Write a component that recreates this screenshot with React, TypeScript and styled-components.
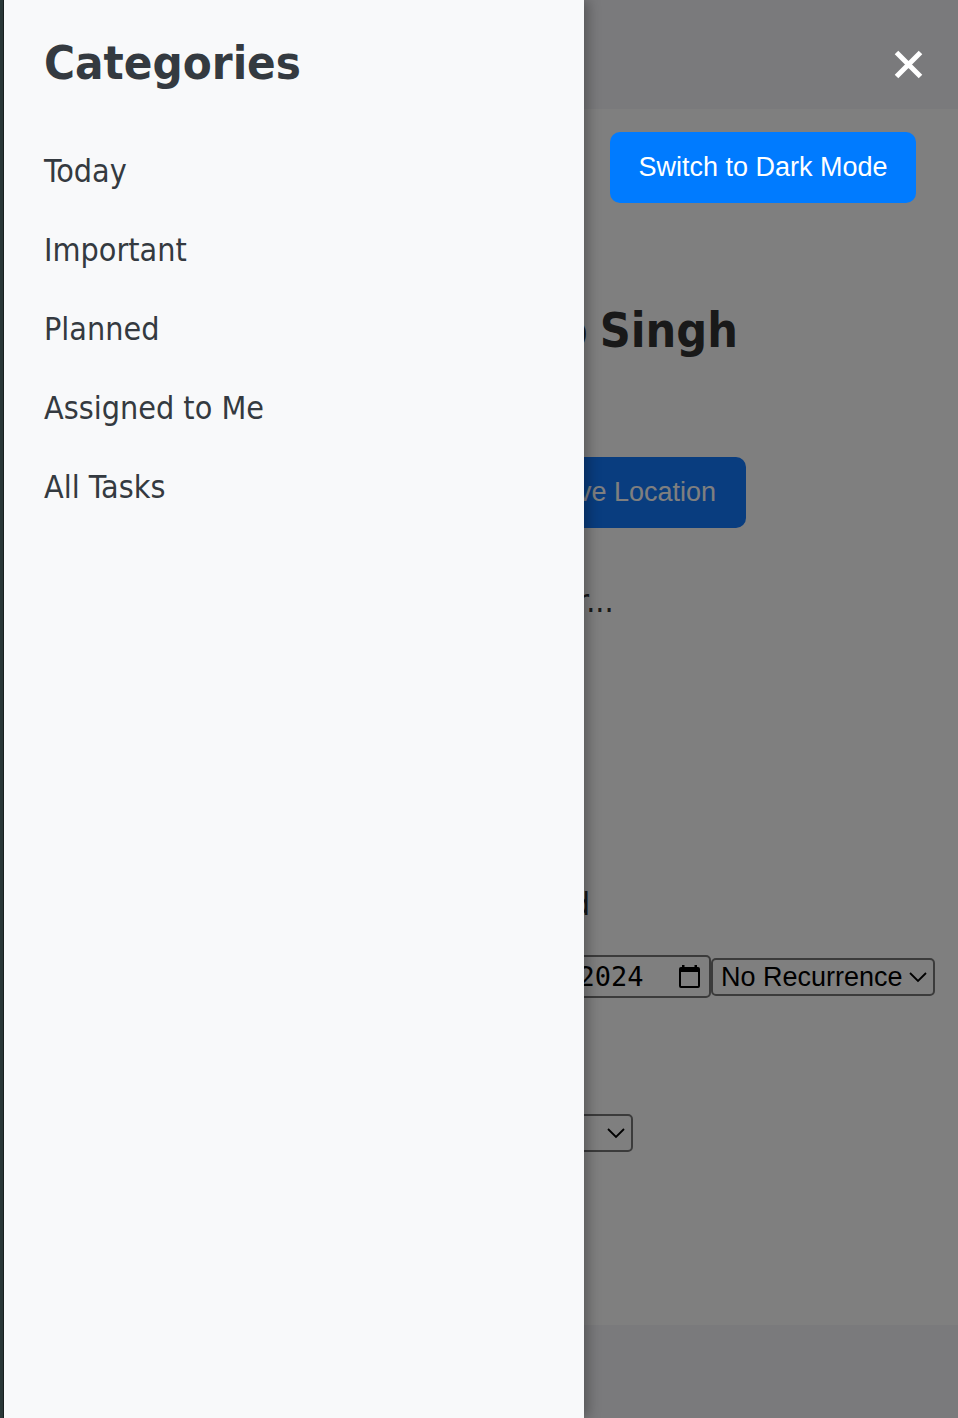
import React from "react";
import styled, { createGlobalStyle } from "styled-components";

const GlobalStyle = createGlobalStyle`
  * { box-sizing: border-box; }
  body {
    margin: 0;
    background: #f5f5f9;
    font-family: "DejaVu Sans Condensed", Tahoma, sans-serif;
    font-size: 32px;
    line-height: 40px;
    color: #333;
  }
  h1, h2, p, ul { margin: 0; padding: 0; }
`;

const Shell = styled.div`
  position: relative;
  display: flex;
  min-height: 100vh;
`;

const Edge = styled.div`
  flex: none;
  width: 4px;
  background: #2b3a3a;
  border-right: 1px solid #1a2222;
`;

const Page = styled.div`
  flex: 1;
  min-width: 0;
  display: flex;
  flex-direction: column;
`;

const Header = styled.header`
  height: 109px;
  background: #f5f5f9;
`;

const Footer = styled.footer`
  flex: 1;
  background: #f5f5f9;
`;

const Main = styled.main`
  display: flex;
  flex-direction: column;
  align-items: center;
  padding: 192px 20px 173px;
  background: #fff;
`;

const Title = styled.h1`
  display: flex;
  justify-content: flex-end;
  gap: 12px;
  min-width: 514px;
  font-size: 48px;
  line-height: 58px;
  white-space: nowrap;
`;

const Button = styled.button<{ $wide?: boolean }>`
  min-width: ${(p) => (p.$wide ? "530px" : "306px")};
  height: 71px;
  padding: 0 ${(p) => (p.$wide ? "30px" : "28px")};
  border: 0;
  border-radius: 10px;
  background: ${(p) => (p.$wide ? "#127aff" : "#007bff")};
  color: #fff;
  font: 27px/31px "Liberation Sans", Arial, sans-serif;
  white-space: nowrap;
  text-align: ${(p) => (p.$wide ? "right" : "center")};
`;

const LocationArea = styled.div`
  padding: 98px 0 53px;
`;

const TaskLine = styled.div`
  display: flex;
  align-items: center;
  justify-content: flex-end;
  width: 218px;
  margin: 263px 0 31px;
  white-space: nowrap;
`;

const Fields = styled.div`
  display: flex;
  align-items: center;
  margin-bottom: 116px;
`;

const Control = styled.span<{ $width: number }>`
  position: relative;
  display: block;
  width: ${(p) => p.$width}px;
  svg {
    position: absolute;
    top: 0;
    bottom: 0;
    right: 8px;
    margin: auto;
    pointer-events: none;
  }
`;

const Input = styled.input<{ $mono?: boolean }>`
  display: block;
  width: 100%;
  height: 43px;
  padding: 0 8px;
  border: 2px solid #767676;
  border-radius: 5px;
  background: #fff;
  color: #000;
  font-size: 27px;
  font-family: ${(p) => (p.$mono ? '"DejaVu Sans Mono", monospace' : '"Liberation Sans", Arial, sans-serif')};
  &::-webkit-calendar-picker-indicator {
    opacity: 0;
    width: 22px;
    margin-left: 26px;
    padding: 0;
  }
`;

const Select = styled.select`
  appearance: none;
  display: block;
  width: 100%;
  height: 38px;
  padding: 2px 8px 0;
  border: 2px solid #767676;
  border-radius: 5px;
  background: #fff;
  color: #000;
  font: 27px/31px "Liberation Sans", Arial, sans-serif;
`;

const Overlay = styled.div`
  position: absolute;
  inset: 0 0 0 4px;
  background: rgba(0, 0, 0, 0.5);
`;

const Drawer = styled.nav`
  position: absolute;
  top: 0;
  bottom: 0;
  left: 4px;
  width: 580px;
  max-width: 100%;
  padding: 34px 40px;
  background: #f8f9fa;
  color: #343a40;
  box-shadow: 4px 0 12px rgba(0, 0, 0, 0.3);
`;

const DrawerTitle = styled.h2`
  font-size: 47px;
  line-height: 58px;
`;

const DrawerList = styled.ul`
  display: flex;
  flex-direction: column;
  gap: 39px;
  margin-top: 59px;
  list-style: none;
`;

const DrawerLink = styled.a`
  color: inherit;
  text-decoration: none;
`;

const TopControls = styled.div`
  position: absolute;
  top: 46px;
  right: 32px;
  display: flex;
  flex-direction: column;
  align-items: flex-end;
  gap: 50px;
  padding-right: 10px;
`;

const CloseButton = styled.button`
  width: 36px;
  height: 36px;
  margin-right: -10px;
  padding: 0;
  border: 0;
  background: none;
  color: #fff;
  svg { display: block; }
`;

const Chevron = () => (
  <svg width="18" height="12" viewBox="0 0 18 12" fill="none" stroke="#000" strokeWidth="1.800" aria-hidden="true">
    <path d="M1 2l8 8 8-8" />
  </svg>
);

const CalendarIcon = () => (
  <svg width="24" height="24" viewBox="0 0 24 24" aria-hidden="true">
    <path d="M3 0h2.500v2h10V0H18v2h1a2 2 0 0 1 2 2v17a2 2 0 0 1-2 2H2a2 2 0 0 1-2-2V4a2 2 0 0 1 2-2h1zM2 7v14h17V7z" fill="#000" fillRule="evenodd" />
  </svg>
);

const categories = ["Today", "Important", "Planned", "Assigned to Me", "All Tasks"];

export default function App() {
  return (
    <>
      <GlobalStyle />
      <Shell>
        <Edge />
        <Page>
          <Header />
          <Main>
            <Title>
              <span>Hello, Kuldeep</span>
              <span>Singh</span>
            </Title>
            <LocationArea>
              <Button $wide>Get Weather for Live Location</Button>
            </LocationArea>
            <p>Loading weather...</p>
            <TaskLine>Task Assigned</TaskLine>
            <Fields>
              <Control $width={439}>
                <Input type="text" aria-label="Task" />
              </Control>
              <Control $width={245}>
                <Input $mono type="date" aria-label="Due date" defaultValue="2024-12-12" />
                <CalendarIcon />
              </Control>
              <Control $width={224}>
                <Select aria-label="Recurrence">
                  <option>No Recurrence</option>
                </Select>
                <Chevron />
              </Control>
            </Fields>
            <Control $width={304}>
              <Select aria-label="Filter">
                <option>All</option>
              </Select>
              <Chevron />
            </Control>
          </Main>
          <Footer />
        </Page>
        <Overlay />
        <Drawer aria-label="Categories">
          <DrawerTitle>Categories</DrawerTitle>
          <DrawerList>
            {categories.map((name) => (
              <li key={name}>
                <DrawerLink href="#">{name}</DrawerLink>
              </li>
            ))}
          </DrawerList>
        </Drawer>
        <TopControls>
          <CloseButton aria-label="Close menu">
            <svg width="36" height="36" viewBox="0 0 36 36" fill="none" stroke="currentColor" strokeWidth="5">
              <path d="M6.500 6.500l24 24M30.500 6.500l-24 24" />
            </svg>
          </CloseButton>
          <Button>Switch to Dark Mode</Button>
        </TopControls>
      </Shell>
    </>
  );
}
